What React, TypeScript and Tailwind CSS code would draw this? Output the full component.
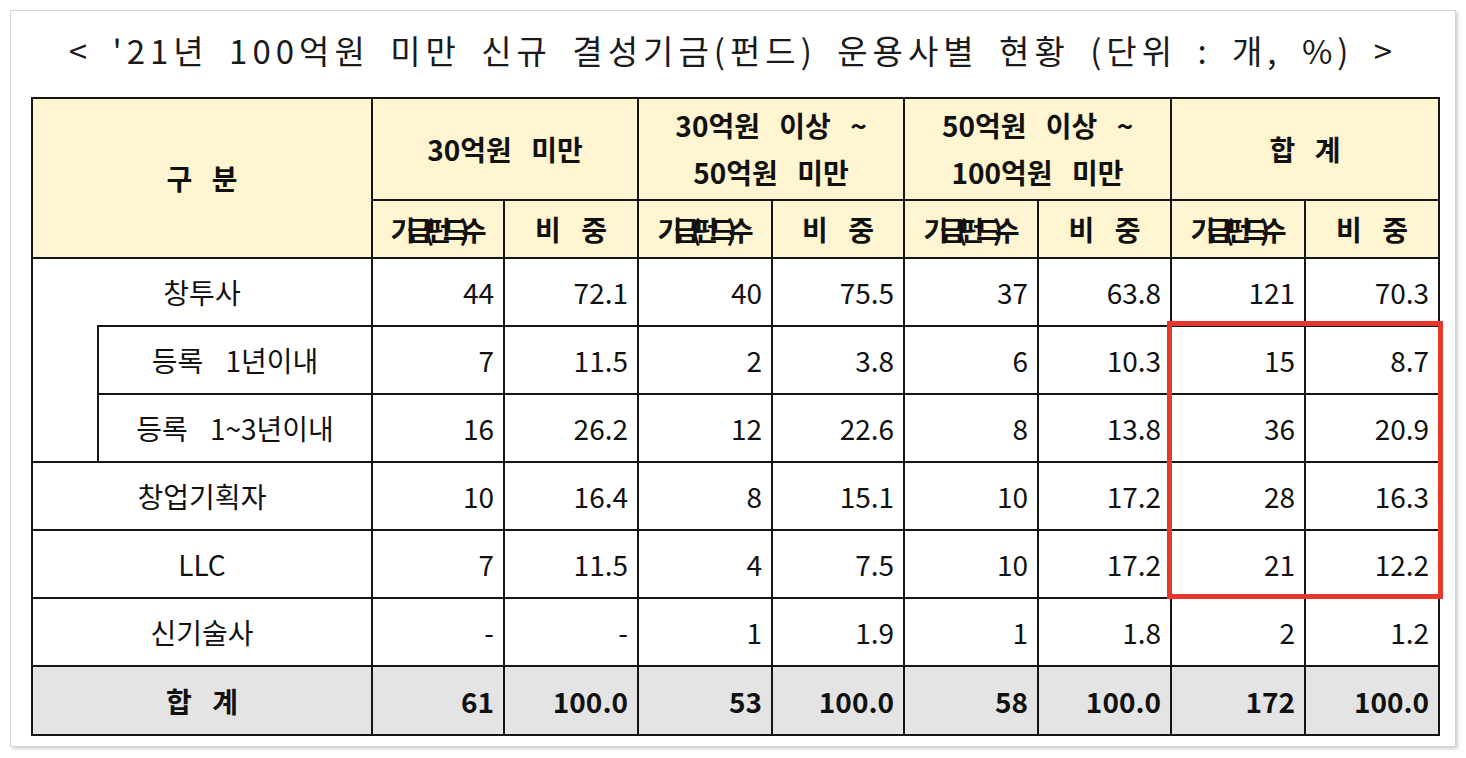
import React from "react";

const rows = [
  { label: "창투사", v: ["44", "72.1", "40", "75.5", "37", "63.8", "121", "70.3"] },
  { label: "등록 1년이내", sub: true, first: true, v: ["7", "11.5", "2", "3.8", "6", "10.3", "15", "8.7"] },
  { label: "등록 1~3년이내", sub: true, v: ["16", "26.2", "12", "22.6", "8", "13.8", "36", "20.9"] },
  { label: "창업기획자", v: ["10", "16.4", "8", "15.1", "10", "17.2", "28", "16.3"] },
  { label: "LLC", v: ["7", "11.5", "4", "7.5", "10", "17.2", "21", "12.2"] },
  { label: "신기술사", v: ["-", "-", "1", "1.9", "1", "1.8", "2", "1.2"] },
];
const total = ["61", "100.0", "53", "100.0", "58", "100.0", "172", "100.0"];

const cell = "border-2 border-[#151515] p-0";
const hdr = "border-2 border-[#151515] p-0 bg-[#fff5d0] text-center font-bold text-[28px] [word-spacing:13px]";

function FundCount() {
  return (
    <span className="inline-block tracking-[-0.3em] pr-[7px] text-[27px] font-bold whitespace-nowrap">
      기금(펀드)수
    </span>
  );
}

export default function App() {
  return (
    <div
      className="w-[1466px] h-[758px] bg-white pt-[10px] pl-[10px] text-[#111]"
      style={{ fontFamily: '"Noto Sans CJK KR", "Noto Sans", sans-serif' }}
    >
      <div className="w-[1446px] h-[737px] bg-white border border-[#d4d4d4] shadow-[2px_2px_3px_rgba(0,0,0,0.18)]">
        <div className="h-[86px] flex items-center justify-center pb-[8px]">
          <div className="text-[33px] leading-none tracking-[5px] [word-spacing:8px] text-[#1a1a1a] whitespace-nowrap">
            &lt; '21년 100억원 미만 신규 결성기금(펀드) 운용사별 현황 (단위 : 개, %) &gt;
          </div>
        </div>
        <div className="relative ml-[20px] w-fit">
          <table className="table-fixed border-collapse w-[1407px]">
            <colgroup>
              <col className="w-[66px]" />
              <col className="w-[274px]" />
              <col className="w-[132px]" />
              <col className="w-[134px]" />
              <col className="w-[134px]" />
              <col className="w-[132px]" />
              <col className="w-[134px]" />
              <col className="w-[133px]" />
              <col className="w-[134px]" />
              <col className="w-[134px]" />
            </colgroup>
            <thead>
              <tr className="h-[102px]">
                <th colSpan={2} rowSpan={2} className={hdr}>
                  구 분
                </th>
                <th colSpan={2} className={hdr}>
                  30억원 미만
                </th>
                <th colSpan={2} className={`${hdr} leading-[47px]`}>
                  30억원 이상 ~
                  <br />
                  50억원 미만
                </th>
                <th colSpan={2} className={`${hdr} leading-[47px]`}>
                  50억원 이상 ~
                  <br />
                  100억원 미만
                </th>
                <th colSpan={2} className={hdr}>
                  합 계
                </th>
              </tr>
              <tr className="h-[58px]">
                {[0, 1, 2, 3].map((i) => (
                  <React.Fragment key={i}>
                    <th className={hdr}>
                      <FundCount />
                    </th>
                    <th className={`${hdr} [word-spacing:14px]`}>비 중</th>
                  </React.Fragment>
                ))}
              </tr>
            </thead>
            <tbody>
              {rows.map((r) => (
                <tr key={r.label} className="h-[68px]">
                  {r.first && (
                    <td rowSpan={2} className={`${cell} [border-top-style:hidden]`}></td>
                  )}
                  <td
                    colSpan={r.sub ? 1 : 2}
                    className={`${cell} text-center text-[28px] [word-spacing:16px] whitespace-nowrap`}
                  >
                    {r.label}
                  </td>
                  {r.v.map((x, i) => (
                    <td key={i} className={`${cell} text-right pr-[9px] text-[28px]`}>
                      {x}
                    </td>
                  ))}
                </tr>
              ))}
              <tr className="h-[69px] bg-[#e4e4e4]">
                <td colSpan={2} className={`${cell} text-center text-[28px] font-bold [word-spacing:14px]`}>
                  합 계
                </td>
                {total.map((x, i) => (
                  <td key={i} className={`${cell} text-right pr-[9px] text-[28px] font-bold`}>
                    {x}
                  </td>
                ))}
              </tr>
            </tbody>
          </table>
          <div className="absolute left-[1136px] top-[224px] w-[276px] h-[278px] border-[5px] border-[#e8382b] pointer-events-none" />
        </div>
      </div>
    </div>
  );
}
